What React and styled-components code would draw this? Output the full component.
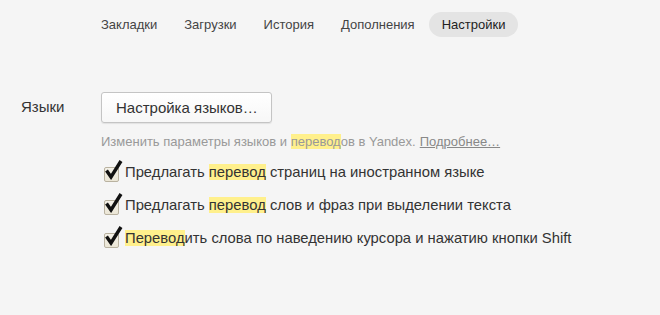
import React from "react";
import styled, { createGlobalStyle } from "styled-components";

const GlobalStyle = createGlobalStyle`
	html, body {
		margin: 0;
		padding: 0;
		background: #f5f5f5;
	}
	body {
		font-family: "Liberation Sans", Arial, sans-serif;
		color: #333;
	}
`;

const Page = styled.div`
	width: 660px;
	height: 315px;
	background: #f5f5f5;
	overflow: hidden;
`;

const Nav = styled.nav`
	display: flex;
	align-items: center;
	padding: 12px 0 0 88px;
	height: 25px;
`;

const Tab = styled.span`
	display: inline-flex;
	align-items: center;
	height: 25px;
	padding: 0 13px;
	margin-right: 1px;
	border-radius: 13px;
	font-size: 13px;
	color: ${(props) => (props.active ? "#222" : "#444")};
	background: ${(props) => (props.active ? "#e4e4e4" : "transparent")};
`;

const Section = styled.section`
	display: flex;
	margin-top: 55px;
`;

const Label = styled.div`
	width: 101px;
	padding-left: 21px;
	box-sizing: border-box;
	font-size: 15px;
	line-height: 30px;
	color: #333;
`;

const Body = styled.div`
	display: flex;
	flex-direction: column;
	align-items: flex-start;
`;

const Button = styled.button`
	height: 31px;
	width: 171px;
	padding: 0 14px;
	text-align: left;
	white-space: nowrap;
	font-family: inherit;
	font-size: 15px;
	color: #333;
	background: linear-gradient(#fff, #f7f7f7);
	border: 1px solid #c4c4c4;
	border-radius: 3px;
	box-shadow: 0 1px 1px rgba(0, 0, 0, 0.08);
`;

const Hint = styled.div`
	margin-top: 11px;
	font-size: 13px;
	color: #999;
	a {
		color: #888;
		text-decoration: underline;
		margin-left: 4px;
	}
`;

const Mark = styled.span`
	background: #fff08c;
`;

const Options = styled.div`
	display: flex;
	flex-direction: column;
	gap: 11px;
	margin-top: 12px;
`;

const Option = styled.label`
	display: flex;
	align-items: center;
	height: 22px;
	font-size: 14.8px;
	color: #333;
`;

const Box = styled.span`
	position: relative;
	width: 15px;
	height: 15px;
	margin: 4px 6px 0 3px;
	box-sizing: border-box;
	border: 1px solid #b9b2a0;
	border-radius: 2px;
	background: linear-gradient(#f4f1e8, #ebe6d6);
	svg {
		position: absolute;
		left: -1px;
		top: -8px;
	}
`;

const Check = () => (
	<Box>
		<svg width="20" height="20" viewBox="0 0 20 20">
			<path d="M2.5 10.5 L7 17 L17 1" fill="none" stroke="#111" strokeWidth="3.4" strokeLinejoin="miter" />
		</svg>
	</Box>
);

const tabs = ["Закладки", "Загрузки", "История", "Дополнения", "Настройки"];

export default function App() {
	return (
		<Page>
			<GlobalStyle />
			<Nav>
				{tabs.map((t) => (
					<Tab key={t} active={t === "Настройки"}>
						{t}
					</Tab>
				))}
			</Nav>
			<Section>
				<Label>Языки</Label>
				<Body>
					<Button>Настройка языков…</Button>
					<Hint>
						Изменить параметры языков и <Mark>перевод</Mark>ов в Yandex.
						<a>Подробнее…</a>
					</Hint>
					<Options>
						<Option>
							<Check />
							<span>
								Предлагать <Mark>перевод</Mark> страниц на иностранном языке
							</span>
						</Option>
						<Option>
							<Check />
							<span>
								Предлагать <Mark>перевод</Mark> слов и фраз при выделении текста
							</span>
						</Option>
						<Option>
							<Check />
							<span>
								<Mark>Перевод</Mark>ить слова по наведению курсора и нажатию кнопки Shift
							</span>
						</Option>
					</Options>
				</Body>
			</Section>
		</Page>
	);
}
